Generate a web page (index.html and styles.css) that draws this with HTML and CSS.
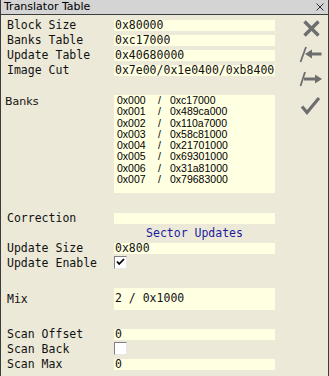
FILE: index.html
```html
<!DOCTYPE html>
<html>
<head>
<meta charset="utf-8">
<link rel="stylesheet" href="styles.css">
</head>
<body>
<div class="window">
  <div class="titlebar">
    <span class="title">Translator Table</span>
    <svg class="close" width="8" height="8" viewBox="0 0 8 8"><path d="M0.5 0.5L7.5 7.5M7.5 0.5L0.5 7.5" stroke="#303030" stroke-width="1" fill="none"/></svg>
  </div>
  <div class="body">
    <div class="form">
      <div class="row"><span class="label">Block Size</span><span class="field">0x80000</span></div>
      <div class="row"><span class="label">Banks Table</span><span class="field">0xc17000</span></div>
      <div class="row"><span class="label">Update Table</span><span class="field">0x40680000</span></div>
      <div class="row"><span class="label">Image Cut</span><span class="field">0x7e00/0x1e0400/0xb8400</span></div>
      <div class="spacer"></div>
      <div class="row row-top banks-row">
        <span class="label label-sans">Banks</span>
        <div class="banks">
          <div class="bank"><span class="b-idx">0x000</span><span class="b-sep">/</span><span>0xc17000</span></div>
          <div class="bank"><span class="b-idx">0x001</span><span class="b-sep">/</span><span>0x489ca000</span></div>
          <div class="bank"><span class="b-idx">0x002</span><span class="b-sep">/</span><span>0x110a7000</span></div>
          <div class="bank"><span class="b-idx">0x003</span><span class="b-sep">/</span><span>0x58c81000</span></div>
          <div class="bank"><span class="b-idx">0x004</span><span class="b-sep">/</span><span>0x21701000</span></div>
          <div class="bank"><span class="b-idx">0x005</span><span class="b-sep">/</span><span>0x69301000</span></div>
          <div class="bank"><span class="b-idx">0x006</span><span class="b-sep">/</span><span>0x31a81000</span></div>
          <div class="bank"><span class="b-idx">0x007</span><span class="b-sep">/</span><span>0x79683000</span></div>
        </div>
      </div>
      <div class="spacer"></div>
      <div class="row"><span class="label">Correction</span><span class="field"></span></div>
      <div class="row"><span class="label"></span><span class="section">Sector Updates</span></div>
      <div class="row"><span class="label">Update Size</span><span class="field">0x800</span></div>
      <div class="row row-check"><span class="label">Update Enable</span>
        <span class="checkbox"><svg width="11" height="11" viewBox="0 0 11 11"><path d="M2 4.5L4.2 7L9 2" stroke="#000" stroke-width="1.8" fill="none"/></svg></span>
      </div>
      <div class="spacer"></div>
      <div class="row mix-row"><span class="label">Mix</span><span class="field field-tall">2 / 0x1000</span></div>
      <div class="spacer"></div>
      <div class="row"><span class="label">Scan Offset</span><span class="field">0</span></div>
      <div class="row row-check"><span class="label">Scan Back</span><span class="checkbox"></span></div>
      <div class="row"><span class="label">Scan Max</span><span class="field">0</span></div>
    </div>
    <div class="tools">
      <div class="tool">
        <svg width="26" height="26" viewBox="0 0 26 26"><path d="M6.5 5.5L20.5 19.5M20.5 5.5L6.5 19.5" stroke="#6e6e6e" stroke-width="3.4" fill="none"/></svg>
      </div>
      <div class="tool">
        <svg width="26" height="26" viewBox="0 0 26 26">
          <path d="M2.5 20L8 5" stroke="#6e6e6e" stroke-width="1.8" fill="none"/>
          <path d="M12 12H23.5" stroke="#6e6e6e" stroke-width="3" fill="none"/>
          <path d="M7 12L14 7.5V16.5Z" fill="#6e6e6e"/>
        </svg>
      </div>
      <div class="tool">
        <svg width="26" height="26" viewBox="0 0 26 26">
          <path d="M2.5 18L7 4" stroke="#6e6e6e" stroke-width="1.8" fill="none"/>
          <path d="M6 11H17" stroke="#6e6e6e" stroke-width="3" fill="none"/>
          <path d="M24 11L17 6.5V15.5Z" fill="#6e6e6e"/>
        </svg>
      </div>
      <div class="tool">
        <svg width="26" height="26" viewBox="0 0 26 26"><path d="M4 12.5L9 18.5L21 4" stroke="#6e6e6e" stroke-width="3.2" fill="none"/></svg>
      </div>
    </div>
  </div>
</div>
</body>
</html>
```

FILE: styles.css
```css
html, body {
  margin: 0;
  padding: 0;
  background: #ece9d8;
}

.window {
  width: 329px;
  height: 376px;
  box-sizing: border-box;
  border-left: 1px solid #3c3c3c;
  border-right: 1px solid #3c3c3c;
  background: #ece9d8;
  overflow: hidden;
}

.titlebar {
  height: 14px;
  background: #d4d4d4;
  border-bottom: 1px solid #3c3c3c;
  display: flex;
  align-items: center;
  justify-content: space-between;
  padding: 0 4px 0 3px;
}

.title {
  font-family: "DejaVu Sans", Verdana, sans-serif;
  font-size: 11px;
  line-height: 14px;
  color: #000;
}

.close {
  display: block;
}

.body {
  display: flex;
}

.form {
  width: 274px;
  padding: 3px 0 0 6px;
  box-sizing: border-box;
  display: flex;
  flex-direction: column;
}

.row {
  display: flex;
  align-items: center;
  height: 15px;
}

.row-top {
  align-items: flex-start;
}

.row-check {
  align-items: flex-start;
}

.spacer {
  height: 15px;
}

.label {
  width: 107px;
  flex: none;
  font-family: "DejaVu Sans Mono", "Liberation Mono", monospace;
  font-size: 11.5px;
  line-height: 13px;
  color: #111;
  white-space: nowrap;
}

.label-sans {
  font-family: "DejaVu Sans", Verdana, sans-serif;
  font-size: 11px;
  margin-left: -2px;
  width: 109px;
  padding-top: 0;
}

.field {
  width: 161px;
  height: 11px;
  flex: none;
  background: #ffffe1;
  font-family: "DejaVu Sans Mono", "Liberation Mono", monospace;
  font-size: 11.5px;
  line-height: 11px;
  padding-left: 1px;
  box-sizing: border-box;
  white-space: nowrap;
  color: #111;
}

.mix-row {
  height: 26px;
}

.field-tall {
  height: 22px;
  padding-top: 5px;
}

.banks-row {
  height: 103px;
  padding-top: 2px;
  box-sizing: border-box;
}

.banks {
  width: 161px;
  height: 98px;
  flex: none;
  background: #ffffe1;
  box-sizing: border-box;
  padding: 0 0 0 3px;
  font-family: "Liberation Sans", Arial, sans-serif;
  font-size: 10.5px;
  line-height: 11.3px;
  color: #000;
}

.bank {
  display: flex;
  white-space: nowrap;
}

.b-idx {
  width: 41px;
  flex: none;
}

.b-sep {
  width: 12px;
  flex: none;
}

.section {
  width: 161px;
  text-align: center;
  font-family: "DejaVu Sans Mono", "Liberation Mono", monospace;
  font-size: 11.5px;
  line-height: 11px;
  color: #1c1ca0;
  white-space: nowrap;
}

.checkbox {
  width: 13px;
  height: 13px;
  flex: none;
  box-sizing: border-box;
  background: #fff;
  border-top: 1px solid #808080;
  border-left: 1px solid #808080;
  border-right: 1px solid #e8e8e8;
  border-bottom: 1px solid #e8e8e8;
  display: flex;
  align-items: center;
  justify-content: center;
}

.checkbox svg {
  display: block;
}

.row-check .label {
  padding-top: 1px;
}

.tools {
  padding: 1px 0 0 23px;
  display: flex;
  flex-direction: column;
}

.tool {
  width: 26px;
  height: 26px;
}

.tool svg {
  display: block;
}
```
